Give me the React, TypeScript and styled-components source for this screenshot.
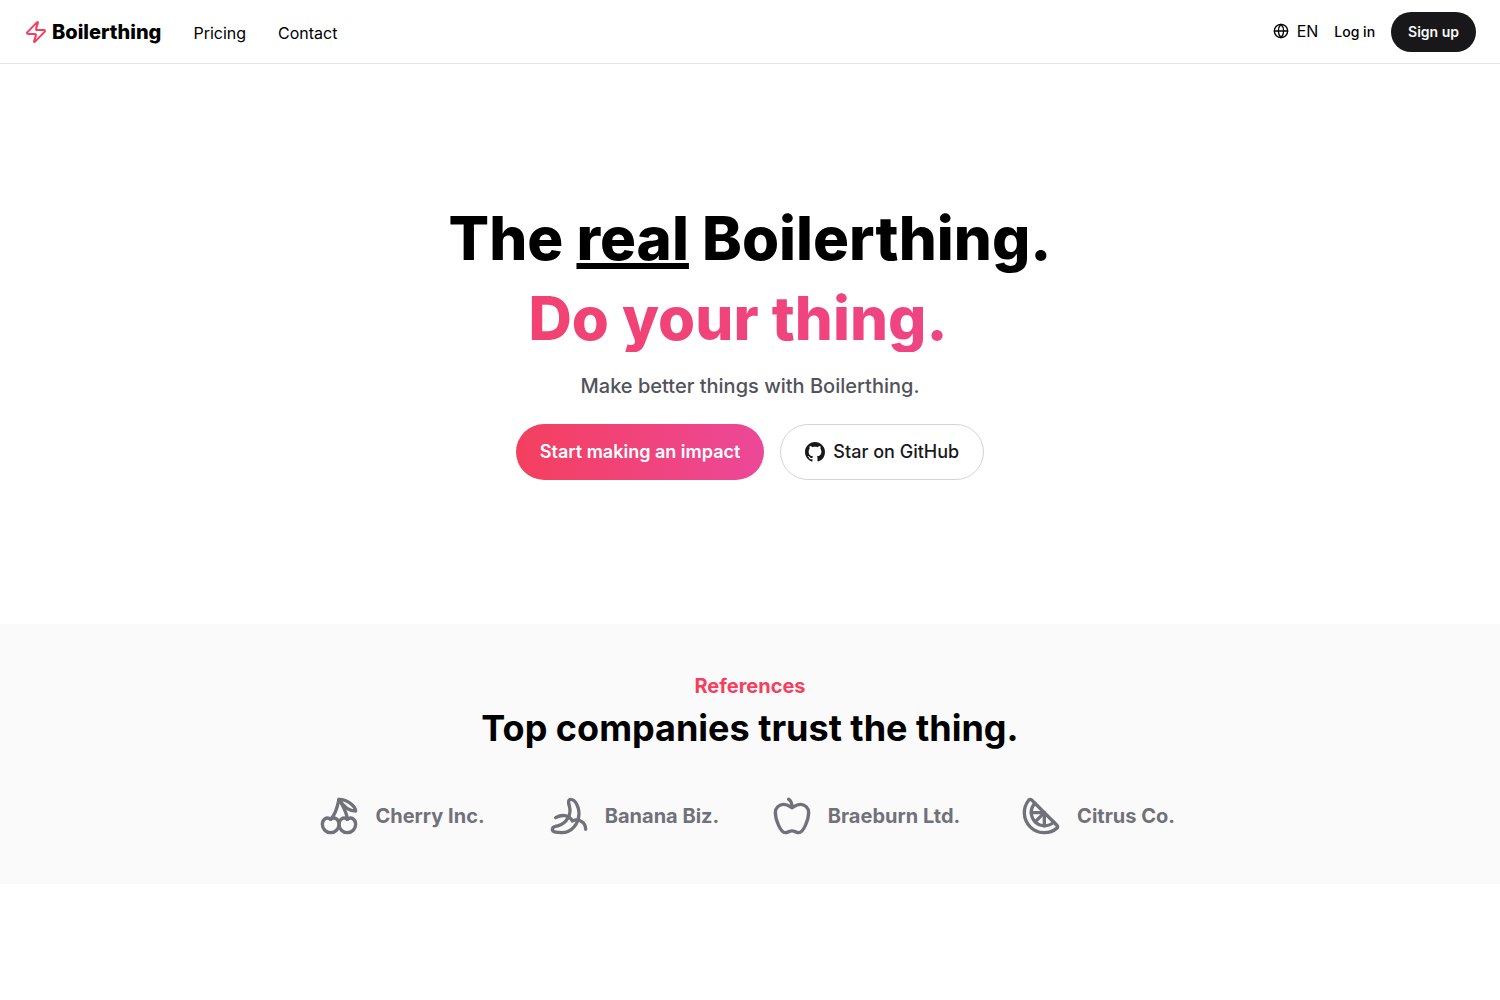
import React from "react";
import styled, { createGlobalStyle } from "styled-components";
import { Zap, Globe, Cherry, Banana, Citrus } from "lucide-react";

const GlobalStyle = createGlobalStyle`
  *, *::before, *::after { box-sizing: border-box; }
  body {
    margin: 0;
    background: #fff;
    color: #000;
    font-family: Inter, "Liberation Sans", sans-serif;
    font-size: 16px;
    line-height: 24px;
    -webkit-font-smoothing: antialiased;
  }
`;

const Header = styled.header`
  display: flex;
  align-items: center;
  justify-content: space-between;
  height: 64px;
  padding: 0 24px;
  border-bottom: 1px solid #e4e4e7;
`;

const Cluster = styled.div<{ $gap: number }>`
  display: flex;
  align-items: center;
  gap: ${(p) => p.$gap}px;
`;

const Brand = styled.a`
  display: flex;
  align-items: center;
  gap: 4px;
  color: #000;
  font-size: 20px;
  line-height: 28px;
  font-weight: 800;
  text-decoration: none;

  svg { color: #f43f5e; }
`;

const Nav = styled.nav`
  display: flex;
  gap: 32px;
  padding-top: 2px;
`;

const NavLink = styled.a<{ $small?: boolean }>`
  color: #000;
  font-size: ${(p) => (p.$small ? 14 : 16)}px;
  font-weight: ${(p) => (p.$small ? 500 : 400)};
  text-decoration: none;
`;

const LanguageButton = styled.button`
  display: flex;
  align-items: center;
  gap: 8px;
  padding: 0 0 2px;
  border: 0;
  background: none;
  color: #000;
  font: inherit;
  cursor: pointer;
`;

const SignUp = styled.a`
  display: flex;
  align-items: center;
  height: 40px;
  padding: 0 17px;
  border-radius: 20px;
  background: #18181b;
  color: #fafafa;
  font-size: 14px;
  font-weight: 600;
  text-decoration: none;
`;

const Hero = styled.section`
  display: flex;
  flex-direction: column;
  align-items: center;
  padding: 144px 24px;
  text-align: center;
`;

const Title = styled.h1`
  display: flex;
  flex-direction: column;
  align-self: stretch;
  gap: 20px;
  margin: 0;
  font-size: 60px;
  line-height: 60px;
  font-weight: 800;
`;

const Slogan = styled.span`
  padding: 0 24px 4px 0;
  background: linear-gradient(to right, #f43f5e, #ec4899);
  background-clip: text;
  -webkit-background-clip: text;
  color: transparent;
`;

const Lead = styled.p`
  margin: 20px 0 24px;
  color: #52525b;
  font-size: 20px;
  line-height: 28px;
  font-weight: 500;
`;

const Action = styled.a<{ $primary?: boolean }>`
  display: flex;
  align-items: center;
  gap: 8px;
  height: 56px;
  padding: 0 24px;
  border: ${(p) => (p.$primary ? "0" : "1px solid #d4d4d8")};
  border-radius: 28px;
  background: ${(p) => (p.$primary ? "linear-gradient(to right, #f43f5e, #ec4899)" : "#fff")};
  color: ${(p) => (p.$primary ? "#fff" : "#18181b")};
  font-size: 18px;
  line-height: 28px;
  font-weight: ${(p) => (p.$primary ? 600 : 500)};
  text-decoration: none;
`;

const References = styled.section`
  display: flex;
  flex-direction: column;
  align-items: center;
  padding: 48px 24px;
  background: #fafafa;
`;

const Eyebrow = styled.p`
  margin: 0;
  color: #f43f5e;
  font-size: 20px;
  line-height: 28px;
  font-weight: 700;
`;

const Subtitle = styled.h2`
  margin: 8px 0 48px;
  font-size: 36px;
  line-height: 40px;
  font-weight: 700;
`;

const Companies = styled.ul`
  display: grid;
  grid-template-columns: repeat(4, 1fr);
  gap: 32px;
  width: 100%;
  max-width: 896px;
  margin: 0;
  padding: 0;
  list-style: none;
`;

const Company = styled.li`
  display: flex;
  align-items: center;
  justify-content: center;
  gap: 16px;
  color: #71717a;
  font-size: 20px;
  line-height: 28px;
  font-weight: 700;
  white-space: nowrap;
`;

const GitHubMark = () => (
  <svg width="20" height="20" viewBox="0 0 16 16" fill="currentColor" aria-hidden="true">
    <path d="M8 0C3.58 0 0 3.58 0 8c0 3.54 2.29 6.53 5.47 7.59.4.07.55-.17.55-.38 0-.19-.01-.82-.01-1.49-2.01.37-2.53-.49-2.69-.94-.09-.23-.48-.94-.82-1.13-.28-.15-.68-.52-.01-.53.63-.01 1.08.58 1.23.82.72 1.21 1.87.87 2.33.66.07-.52.28-.87.51-1.07-1.78-.2-3.64-.89-3.64-3.95 0-.87.31-1.59.82-2.15-.08-.2-.36-1.02.08-2.12 0 0 .67-.21 2.2.82.64-.18 1.32-.27 2-.27s1.36.09 2 .27c1.53-1.04 2.2-.82 2.2-.82.44 1.1.16 1.92.08 2.12.51.56.82 1.27.82 2.15 0 3.07-1.87 3.75-3.65 3.95.29.25.54.73.54 1.48 0 1.07-.01 1.93-.01 2.2 0 .21.15.46.55.38A8.01 8.01 0 0 0 16 8c0-4.42-3.58-8-8-8z" />
  </svg>
);

const Apple = ({ size }: { size: number }) => (
  <svg
    width={size}
    height={size}
    viewBox="0 0 24 24"
    fill="none"
    stroke="currentColor"
    strokeWidth="2"
    strokeLinecap="round"
    strokeLinejoin="round"
    aria-hidden="true"
  >
    <path d="M12 20.94c1.5 0 2.75 1.06 4 1.06 3 0 6-8 6-12.22A4.91 4.91 0 0 0 17 5c-2.22 0-4 1.44-5 2-1-.56-2.78-2-5-2a4.9 4.9 0 0 0-5 4.78C2 14 5 22 8 22c1.25 0 2.5-1.06 4-1.06Z" />
    <path d="M10 2c1 .5 2 2 2 5" />
  </svg>
);

const companies = [
  { name: "Cherry Inc.", Icon: Cherry },
  { name: "Banana Biz.", Icon: Banana },
  { name: "Braeburn Ltd.", Icon: Apple },
  { name: "Citrus Co.", Icon: Citrus },
];

export default function App() {
  return (
    <>
      <GlobalStyle />
      <Header>
        <Cluster $gap={32}>
          <Brand href="#">
            <Zap size={24} />
            Boilerthing
          </Brand>
          <Nav>
            <NavLink href="#pricing">Pricing</NavLink>
            <NavLink href="#contact">Contact</NavLink>
          </Nav>
        </Cluster>
        <Cluster $gap={16}>
          <LanguageButton type="button">
            <Globe size={16} />
            EN
          </LanguageButton>
          <NavLink href="#login" $small>Log in</NavLink>
          <SignUp href="#signup">Sign up</SignUp>
        </Cluster>
      </Header>
      <main>
        <Hero>
          <Title>
            <span>The <u>real</u> Boilerthing.</span>
            <Slogan>Do your thing.</Slogan>
          </Title>
          <Lead>Make better things with Boilerthing.</Lead>
          <Cluster $gap={16}>
            <Action href="#start" $primary>Start making an impact</Action>
            <Action href="#github">
              <GitHubMark />
              Star on GitHub
            </Action>
          </Cluster>
        </Hero>
        <References>
          <Eyebrow>References</Eyebrow>
          <Subtitle>Top companies trust the thing.</Subtitle>
          <Companies>
            {companies.map(({ name, Icon }) => (
              <Company key={name}>
                <Icon size={40} />
                {name}
              </Company>
            ))}
          </Companies>
        </References>
      </main>
    </>
  );
}
